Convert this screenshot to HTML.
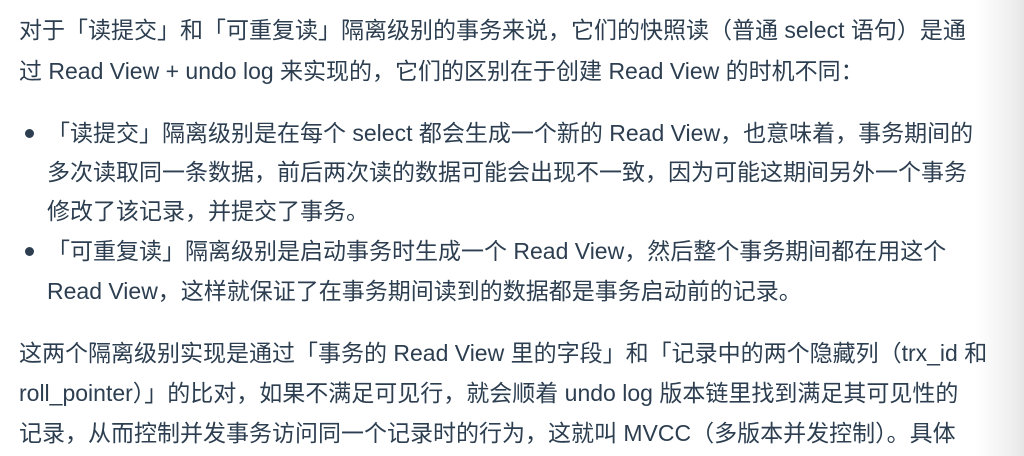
<!DOCTYPE html>
<html><head><meta charset="utf-8"><style>
html,body{margin:0;padding:0;width:1024px;height:456px;overflow:hidden;background:#fff;}
body{background:linear-gradient(to right,#fff 0,#fff 975px,#f0f0f0 1010px,#e6e6e6 1024px);}
.l{position:absolute;white-space:nowrap;font-family:"Liberation Sans","Noto Sans CJK SC",sans-serif;font-size:23px;line-height:40px;color:#2c3e50;}
.d{position:absolute;width:9px;height:9px;border-radius:50%;background:#2c3e50;left:25px;}
</style></head><body>
<div class="l" style="left:19px;top:10px">对于「读提交」和「可重复读」隔离级别的事务来说，它们的快照读（普通 select 语句）是通</div>
<div class="l" style="left:19px;top:51px">过 Read View + undo log 来实现的，它们的区别在于创建 Read View 的时机不同：</div>
<div class="d" style="top:129px"></div>
<div class="l" style="left:47px;top:113px">「读提交」隔离级别是在每个 select 都会生成一个新的 Read View，也意味着，事务期间的</div>
<div class="l" style="left:47px;top:152px">多次读取同一条数据，前后两次读的数据可能会出现不一致，因为可能这期间另外一个事务</div>
<div class="l" style="left:47px;top:191px">修改了该记录，并提交了事务。</div>
<div class="d" style="top:247px"></div>
<div class="l" style="left:47px;top:231px">「可重复读」隔离级别是启动事务时生成一个 Read View，然后整个事务期间都在用这个</div>
<div class="l" style="left:47px;top:271px">Read View，这样就保证了在事务期间读到的数据都是事务启动前的记录。</div>
<div class="l" style="left:19px;top:333px">这两个隔离级别实现是通过「事务的 Read View 里的字段」和「记录中的两个隐藏列（trx_id 和</div>
<div class="l" style="left:19px;top:373px">roll_pointer）」的比对，如果不满足可见行，就会顺着 undo log 版本链里找到满足其可见性的</div>
<div class="l" style="left:19px;top:413px">记录，从而控制并发事务访问同一个记录时的行为，这就叫 MVCC（多版本并发控制）。具体</div>
</body></html>
